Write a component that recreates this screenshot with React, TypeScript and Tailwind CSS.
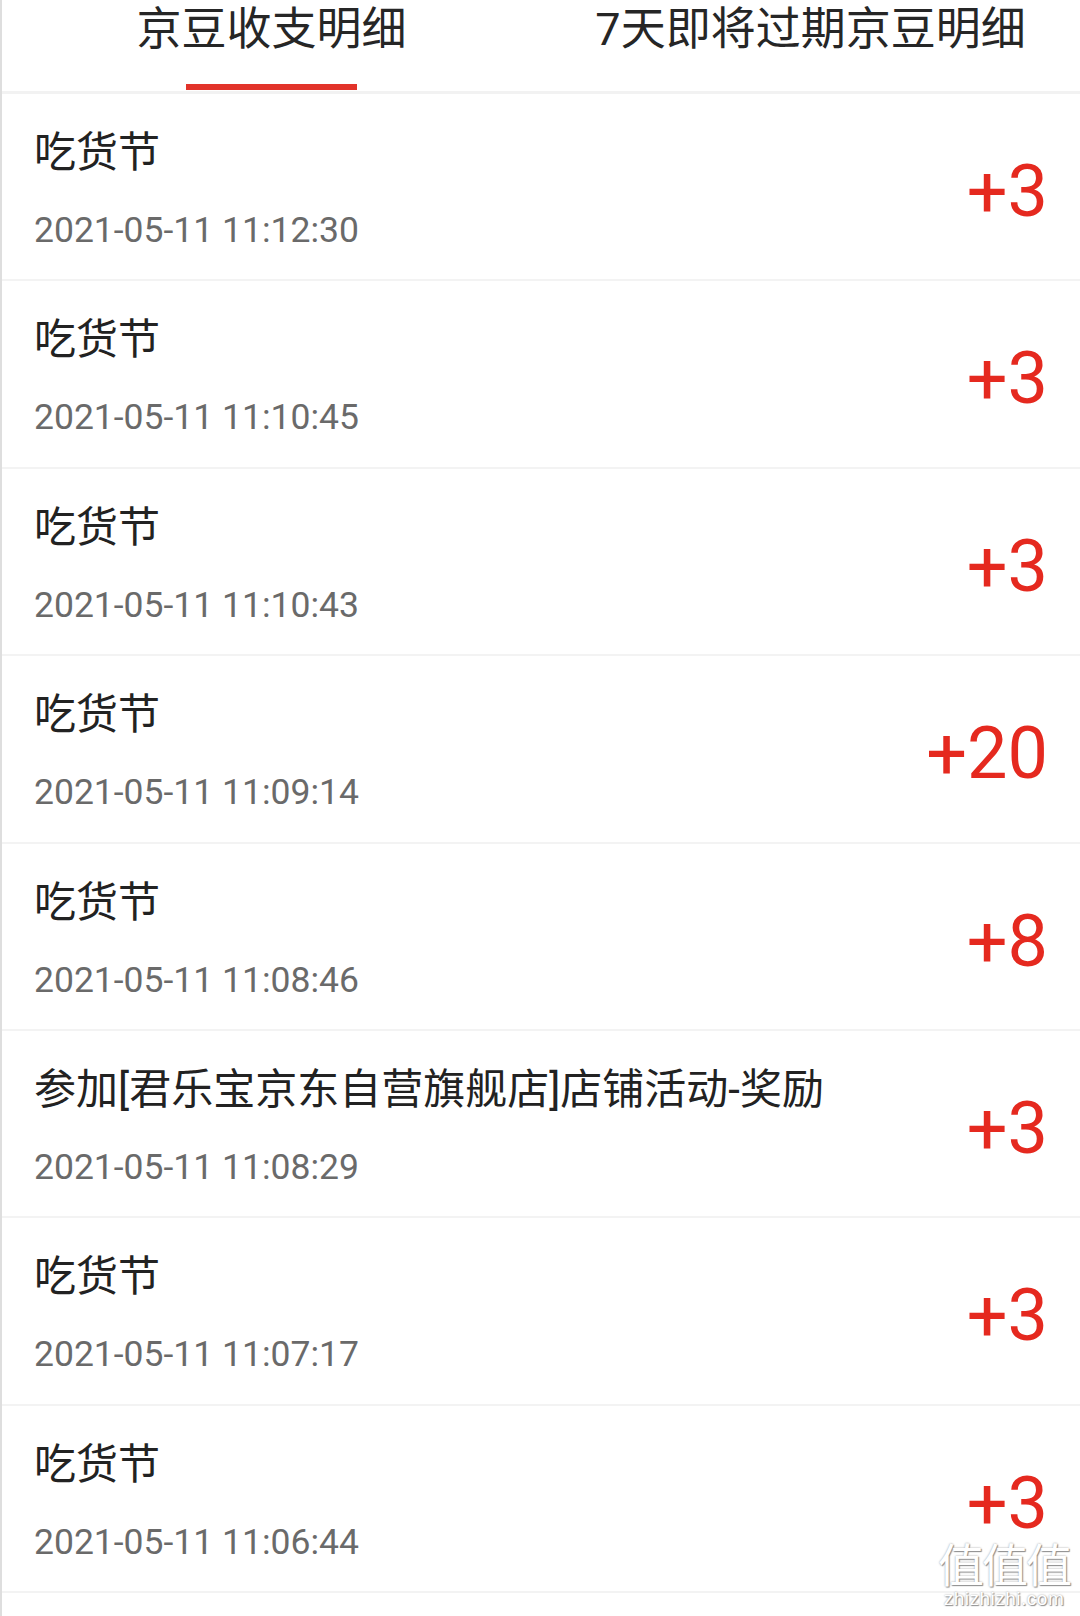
import React from 'react'

type Record = {
  title: string
  time: string
  amount: number
}

const RECORDS: Record[] = [
  { title: '吃货节', time: '2021-05-11 11:12:30', amount: 3 },
  { title: '吃货节', time: '2021-05-11 11:10:45', amount: 3 },
  { title: '吃货节', time: '2021-05-11 11:10:43', amount: 3 },
  { title: '吃货节', time: '2021-05-11 11:09:14', amount: 20 },
  { title: '吃货节', time: '2021-05-11 11:08:46', amount: 8 },
  { title: '参加[君乐宝京东自营旗舰店]店铺活动-奖励', time: '2021-05-11 11:08:29', amount: 3 },
  { title: '吃货节', time: '2021-05-11 11:07:17', amount: 3 },
  { title: '吃货节', time: '2021-05-11 11:06:44', amount: 3 },
]

const FONT = "font-['Roboto','Noto_Sans_CJK_SC',sans-serif]"

function Tabs() {
  return (
    <div className="flex h-[94px] border-b-[3px] border-[#f2f2f2]">
      <div className="flex flex-1 flex-col items-center">
        <span className="mt-[7px] text-[45px] leading-none text-[#262626]">京豆收支明细</span>
        <div className="mt-[32px] h-[6px] w-[171px] bg-[#e2332a]" />
      </div>
      <div className="flex flex-1 flex-col items-center">
        <span className="mt-[7px] text-[45px] leading-none text-[#262626]">7天即将过期京豆明细</span>
      </div>
    </div>
  )
}

function Row({ title, time, amount }: Record) {
  return (
    <div className="flex h-[187.4px] shrink-0 justify-between border-b-2 border-[#f3f3f3] pl-[32px] pr-[32px]">
      <div className="flex flex-col">
        <span className="mt-[38px] text-[42px] leading-none text-[#222]">{title}</span>
        <span className="mt-[39px] text-[35.5px] leading-none text-[#6a6a6a]">{time}</span>
      </div>
      <span className="h-fit pt-[66px] text-[72px] leading-[64px] text-[#e5291f]">+{amount}</span>
    </div>
  )
}

export default function App() {
  return (
    <div className={`relative h-[1616px] w-[1080px] overflow-hidden border-l-2 border-[#dedede] bg-white ${FONT}`}>
      <Tabs />
      <div className="flex flex-col">
        {RECORDS.map((r, i) => (
          <Row key={i} {...r} />
        ))}
      </div>

      {/* site watermark */}
      <div className="absolute right-[10px] top-[1540px] flex flex-col items-center font-['Noto_Sans_CJK_SC',sans-serif] text-white [text-shadow:0_0_2px_#9a9a9a,1px_1px_1px_#8a8a8a]">
        <span className="text-[46px] leading-[44px] tracking-[-2px]">值值值</span>
        <span className="mt-[5px] font-['Liberation_Sans',sans-serif] text-[19px] leading-none tracking-[0.5px]">zhizhizhi.com</span>
      </div>
    </div>
  )
}
